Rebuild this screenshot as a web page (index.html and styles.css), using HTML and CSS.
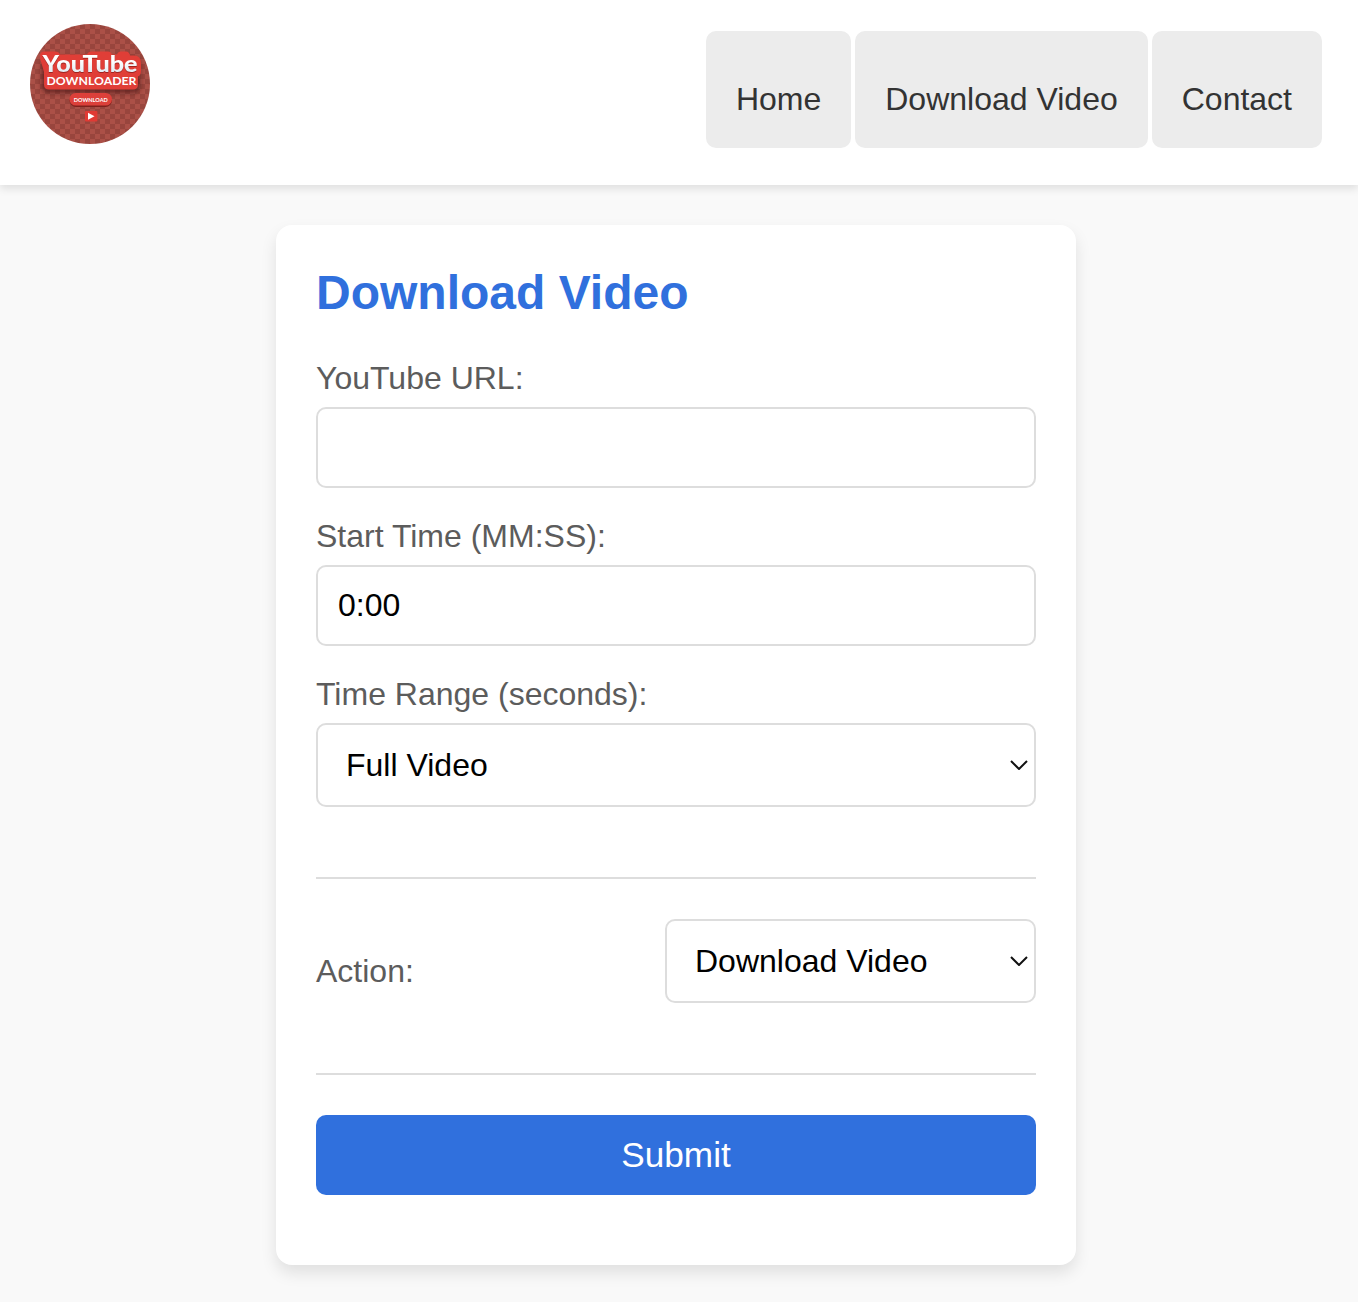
FILE: index.html
```html
<!DOCTYPE html>
<html lang="en">
<head>
<meta charset="utf-8">
<title>Download Video</title>
<link rel="stylesheet" href="styles.css">
</head>
<body>
<header class="header">
  <svg class="logo" viewBox="0 0 120 120" role="img" aria-label="YouTube Downloader">
    <defs>
      <pattern id="checks" width="10" height="10" patternUnits="userSpaceOnUse">
        <rect width="10" height="10" fill="#ab5047"/>
        <path d="M0 0h5v5H0zM5 5h5v5H5z" fill="#98453d"/>
      </pattern>
      <filter id="soft" x="-20%" y="-50%" width="140%" height="200%"><feGaussianBlur stdDeviation="2.5"/></filter>
      <linearGradient id="letters" x1="0" y1="0" x2="0" y2="1">
        <stop offset=".4" stop-color="#fff"/>
        <stop offset="1" stop-color="#d5e3ed"/>
      </linearGradient>
    </defs>
    <circle cx="60" cy="60" r="60" fill="url(#checks)"/>
    <rect x="12" y="34" width="98" height="35" rx="6" fill="#4a1512" opacity=".65" filter="url(#soft)"/>
    <path d="M14 27.500h11q4 0 5 3h27q1-3 5-3h16q3 0 4 3h5q1-3 4-3h5q3 0 4 4h4q7 0 7 8v7q0 5-3 6v8q0 5-5 5H19q-5 0-5-5V48l-4-14q-1-6 4-6.500z" fill="#e03e37"/>
    <text class="logo-title" x="12.500" y="48.300" textLength="95" lengthAdjust="spacingAndGlyphs">YouTube</text>
    <text class="logo-subtitle" x="16.500" y="60.600" textLength="90" lengthAdjust="spacingAndGlyphs">DOWNLOADER</text>
    <rect x="39.500" y="70" width="42.500" height="13" rx="6.500" fill="#7e211c"/>
    <rect x="39.500" y="69" width="42.500" height="12.600" rx="6.300" fill="#dc403a"/>
    <text class="logo-button" x="43.800" y="77.700" textLength="34" lengthAdjust="spacingAndGlyphs">DOWNLOAD</text>
    <rect x="55" y="87" width="12.400" height="10.600" rx="1" fill="#e03a34"/>
    <path d="M58 88.800l6.500 3.500-6.500 3.500z" fill="#fff"/>
  </svg>
  <nav class="nav">
    <a class="nav-link">Home</a>
    <a class="nav-link">Download Video</a>
    <a class="nav-link">Contact</a>
  </nav>
</header>
<main class="card">
  <h1 class="title">Download Video</h1>
  <form>
    <div class="field">
      <label class="label" for="url">YouTube URL:</label>
      <input class="control" id="url" type="text">
    </div>
    <div class="field">
      <label class="label" for="start">Start Time (MM:SS):</label>
      <input class="control" id="start" type="text" value="0:00">
    </div>
    <div class="field">
      <label class="label" for="range">Time Range (seconds):</label>
      <div class="control select" id="range">
        <span>Full Video</span>
        <svg class="chevron" viewBox="0 0 18 10"><path d="M1 1l8 8 8-8"/></svg>
      </div>
    </div>
    <div class="action">
      <label class="label" for="action">Action:</label>
      <div class="control select select-action" id="action">
        <span>Download Video</span>
        <svg class="chevron" viewBox="0 0 18 10"><path d="M1 1l8 8 8-8"/></svg>
      </div>
    </div>
    <button class="submit" type="button">Submit</button>
  </form>
</main>
</body>
</html>
```
FILE: styles.css
```css
* {
  box-sizing: border-box;
}

body {
  margin: 0;
  min-height: 1302px;
  background: #f9f9f9;
  font-family: "Liberation Sans", Arial, sans-serif;
  font-size: 32px;
}

.header {
  display: flex;
  justify-content: space-between;
  align-items: flex-start;
  height: 185px;
  padding: 24px 36px 0 30px;
  background: #fff;
  box-shadow: 0 4px 8px rgba(0, 0, 0, 0.1);
}

.logo {
  width: 120px;
  height: 120px;
}

.logo-title {
  font: 900 23.5px Lato, sans-serif;
  fill: url(#letters);
  filter: drop-shadow(0 1px 0 #9f241f);
}

.logo-subtitle {
  font: 700 12px Lato, sans-serif;
  fill: #fff;
}

.logo-button {
  font: 700 5.8px Lato, sans-serif;
  fill: #fff;
}

.nav {
  display: flex;
  gap: 4px;
  padding-top: 7px;
}

.nav-link {
  height: 117px;
  padding: 50px 30px 30px;
  border-radius: 10px;
  background: #ececec;
  color: #333;
  line-height: 37px;
}

.card {
  width: 800px;
  height: 1040px;
  margin: 40px 0 0 276px;
  padding: 40px;
  border-radius: 16px;
  background: #fff;
  box-shadow: 0 8px 16px rgba(0, 0, 0, 0.1);
}

.title {
  margin: 0 0 40px;
  color: #3070dd;
  font-size: 48px;
  line-height: 55px;
}

.field {
  margin-bottom: 30px;
}

.label {
  display: block;
  color: #5c5c5c;
  line-height: 37px;
}

.control {
  display: block;
  width: 100%;
  height: 81px;
  margin-top: 10px;
  padding: 0 20px;
  border: 2px solid #ddd;
  border-radius: 10px;
  background: #fff;
  color: #000;
  font: inherit;
}

.select {
  display: flex;
  justify-content: space-between;
  align-items: center;
  height: 84px;
  padding: 0 6px 0 28px;
}

.chevron {
  width: 18px;
  height: 10px;
  fill: none;
  stroke: #111;
  stroke-width: 2;
}

.action {
  display: flex;
  justify-content: space-between;
  align-items: center;
  height: 198px;
  margin: 70px 0 40px;
  padding-bottom: 10px;
  border-top: 2px solid #ddd;
  border-bottom: 2px solid #ddd;
}

.select-action {
  width: 371px;
  margin: -20px 0 0;
}

.submit {
  display: block;
  width: 100%;
  height: 80px;
  border: 0;
  border-radius: 10px;
  background: #3070dd;
  color: #fff;
  font: 35.2px "Liberation Sans", Arial, sans-serif;
}
```
